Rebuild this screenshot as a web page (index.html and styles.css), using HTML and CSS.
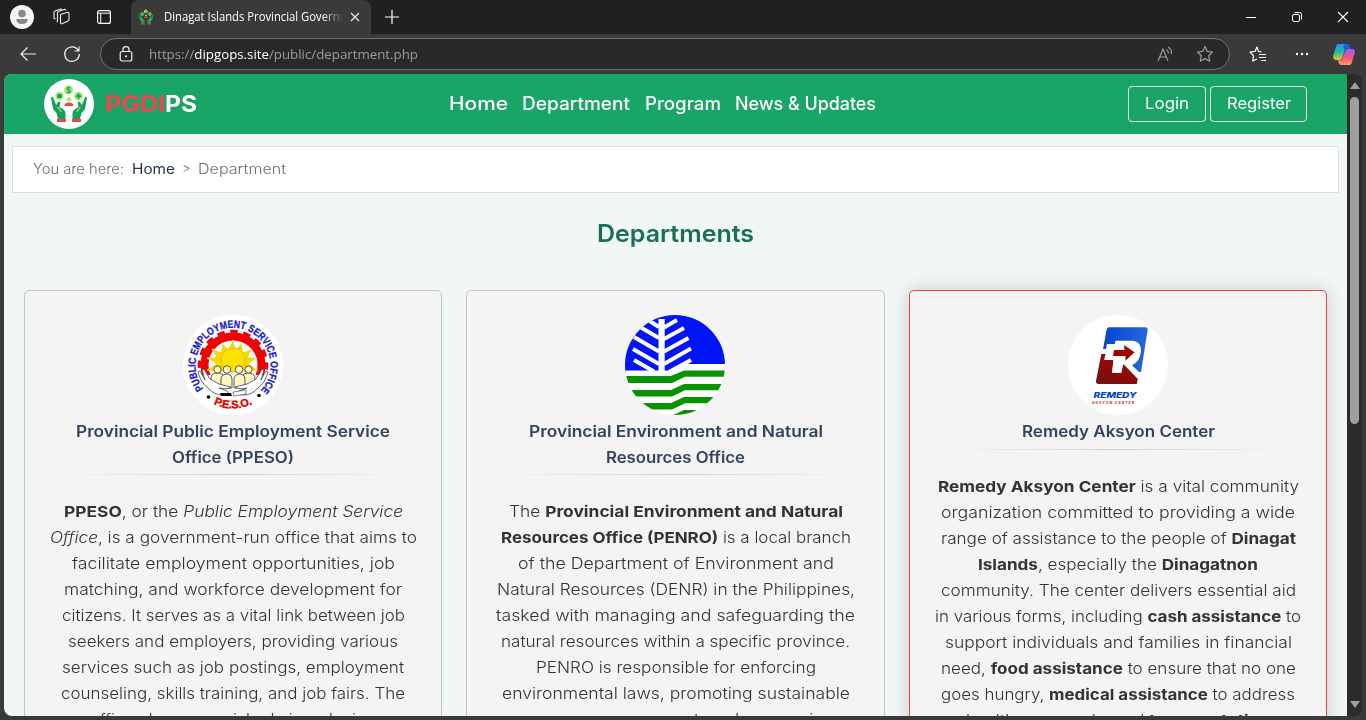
FILE: index.html
```html
<!DOCTYPE html>
<html lang="en">
<head>
<meta charset="utf-8">
<title>Dinagat Islands Provincial Government</title>
<link rel="stylesheet" href="styles.css">
</head>
<body>
<svg width="0" height="0" class="defs">
  <defs>
    <g id="hands">
      <path d="M7 18.500l1.800-.8 3.400 8.300 2-3q2-1.500 2 1l-.7 4 4 2.500q2 1.500 2 4V40h-7.500l-1.500-6-3.500-4z" fill="#13a357"/>
      <path d="M43 18.500l-1.800-.8-3.400 8.300-2-3q-2-1.500-2 1l.7 4-4 2.500q-2 1.500-2 4V40h7.500l1.500-6 3.500-4z" fill="#13a357"/>
      <path d="M13.500 28l4 5M36.500 28l-4 5" stroke="#a6ec6c" stroke-width="1.200"/>
      <path d="M13 40h9v3h-9zM28 40h9v3h-9zM20.500 27q0-3.500 4.500-3.500t4.500 3.500z" fill="#ee4549"/>
      <circle cx="15.500" cy="17" r="4.200" fill="#a6ec6c"/><circle cx="34.500" cy="17" r="4.200" fill="#a6ec6c"/>
      <circle cx="24.500" cy="11" r="4.500" fill="#a6ec6c"/><circle cx="25" cy="20.500" r="2.300" fill="#a6ec6c"/>
      <path d="M13.300 15h4.500v4h-4.500zM33.600 14.200h1.800v2h2v1.800h-2v2h-1.800v-2h-2v-1.800h2z" fill="#13a357"/>
      <text x="24.500" y="13.700" font-size="7.500" font-weight="700" text-anchor="middle" fill="#13a357">$</text>
    </g>
  </defs>
</svg>
<header class="titlebar">
  <svg class="avatar" viewBox="0 0 24 24"><circle cx="12" cy="12" r="12" fill="#f5f5f5"/><circle cx="12" cy="8.500" r="3.800" fill="#888"/><path d="M6.300 14h11.400q0 5-5.700 5t-5.700-5z" fill="#888"/></svg>
  <svg class="spaces" viewBox="0 0 18 18"><g fill="none" stroke="#eee" stroke-width="1.100" stroke-linejoin="round"><path d="M7.500 6.500l6.500-2q2-.5 2 1v6q0 1-1 1.500l-5.500 2.500q-2 .8-2-1z"/><path d="M5 12.500l-.5.200V5q0-1 1-1.400L11 1.500q1.500-.5 1.800 1M5 14q-1 0-.7-1.500"/><path d="M2.500 10.500q-1.500 1-1.500-.7V4.500q0-1 1-1.400L7 1.200q1.200-.4 1.700.5"/></g></svg>
  <svg class="panel" viewBox="0 0 14 14"><rect x=".6" y=".6" width="12.800" height="12.800" rx="2" fill="none" stroke="#fff" stroke-width="1.200"/><path d="M1 3.200h12M3.700 3v10" stroke="#fff"/></svg>
  <div class="tab">
    <svg class="favicon" viewBox="6 5 38 39"><use href="#hands"/></svg>
    <span class="tab-title"><span class="fit" data-w="186">Dinagat Islands Provincial Governm</span></span>
    <svg class="tab-x" viewBox="0 0 10 10"><path d="M1 1l8 8M9 1l-8 8" stroke="#eee" stroke-width="1.200"/></svg>
  </div>
  <svg class="plus" viewBox="0 0 14 14"><path d="M7 0v14M0 7h14" stroke="#fff" stroke-width="1.200"/></svg>
  <div class="win">
    <svg viewBox="0 0 12 12"><path d="M1 6.500h10" stroke="#fff"/></svg>
    <svg viewBox="0 0 12 12"><g fill="none" stroke="#fff"><rect x="1.500" y="3.500" width="7" height="7" rx="1.500"/><path d="M3.500 1.500h5q2 0 2 2v5"/></g></svg>
    <svg viewBox="0 0 12 12"><path d="M1 1l10 10M11 1L1 11" stroke="#fff" stroke-width="1.100"/></svg>
  </div>
</header>
<div class="toolbar">
  <svg class="back" viewBox="0 0 18 16"><path d="M17 8H2M8.500 1.500L2 8l6.500 6.500" fill="none" stroke="#eee" stroke-width="1.200"/></svg>
  <svg class="reload" viewBox="0 0 18 18"><path d="M15.600 6A7.300 7.300 0 1 0 16.300 9M16 1.500V6h-4.500" fill="none" stroke="#eee" stroke-width="1.200"/></svg>
  <div class="address">
    <svg class="lock" viewBox="0 0 14 16"><g fill="none" stroke="#eee" stroke-width="1.200"><rect x="1.200" y="5.500" width="11.600" height="9.500" rx="2"/><path d="M4 5.500V3.500a3 2.800 0 0 1 6 0v2"/></g><circle cx="7" cy="10.200" r="1" fill="#fff"/></svg>
    <span class="fit url" data-w="269">https://<b>dipgops.site</b>/public/department.php</span>
    <svg class="read" viewBox="0 0 16 16"><path d="M1 15L6 3l5 12M2.500 11h7M9.500 3.500q2 1.500 2 4M11 1q4 2.500 3.500 7" fill="none" stroke="#a0a0a0" stroke-width="1.100"/></svg>
    <svg class="star" viewBox="0 0 18 18"><path d="M9 1.500l2.300 4.900 5.200.7-3.800 3.700 1 5.400L9 13.600l-4.700 2.600 1-5.400L1.500 7.100l5.200-.7z" fill="none" stroke="#a0a0a0" stroke-width="1.200" stroke-linejoin="round"/></svg>
  </div>
  <svg class="favs" viewBox="0 0 18 18"><path d="M10 9.500h7M10 12.500h7M12 15.500h5M12.500 7l-3-.6L8 2 6 6.400l-5 .8 3.600 3.600-.9 5.200L8 14" fill="none" stroke="#fff" stroke-width="1.200" stroke-linejoin="round"/></svg>
  <svg class="dots" viewBox="0 0 14 4"><g fill="#fff"><circle cx="2" cy="2" r="1.200"/><circle cx="7" cy="2" r="1.200"/><circle cx="12" cy="2" r="1.200"/></g></svg>
  <svg class="copilot" viewBox="0 0 22 21">
    <defs><linearGradient id="ca" x2="0" y2="1"><stop stop-color="#159bf1"/><stop offset=".5" stop-color="#25b8a5"/><stop offset="1" stop-color="#e4cb20"/></linearGradient><linearGradient id="cb" x2="0" y2="1"><stop stop-color="#a35cf3"/><stop offset=".55" stop-color="#f05482"/><stop offset="1" stop-color="#ff9d4f"/></linearGradient></defs>
    <path d="M5 0h9q2 0 2.700 2.500L17.300 5H14q-2 0-2.500 1.800L9.500 13q-.8 3-3 3H3Q-.5 16 .4 11L3 2.500Q3.600 0 5 0z" fill="url(#ca)"/>
    <path d="M12 0h2q2 0 2.700 2.500L17.300 5H14q-1.500 0-2 1L10 3z" fill="#195ce0"/>
    <path d="M17 21H8q-2 0-2.700-3l-.6-2H7q2 0 2.500-2L12 7.500Q12.600 5 15 5h4q3.500 0 2.600 4.500L19 18q-.7 3-2 3z" fill="url(#cb)"/>
  </svg>
</div>
<div class="viewport">
  <div class="page">
    <nav class="navbar">
      <svg class="brand-logo" viewBox="0 0 50 50"><circle cx="25" cy="25" r="25" fill="#fff"/><use href="#hands"/></svg>
      <div class="brand"><span class="fit" data-w="60"><span class="red">PGDI</span></span><span class="fit" data-w="32">PS</span></div>
      <div class="links"><a class="fit" data-w="59">Home</a><a class="fit" data-w="108">Department</a><a class="fit" data-w="76">Program</a><a class="fit" data-w="141">News &amp; Updates</a></div>
      <div class="auth"><a class="btn login"><span class="fit" data-w="44">Login</span></a><a class="btn register"><span class="fit" data-w="64">Register</span></a></div>
    </nav>
    <div class="crumbs"><span class="fit here" data-w="91">You are here:</span><span class="fit home" data-w="43">Home</span><span class="sep">&gt;</span><span class="fit" data-w="88">Department</span></div>
    <h1><span class="fit" data-w="157">Departments</span></h1>
    <main class="cards">
      <article class="card">
        <svg class="seal" viewBox="0 0 100 100">
          <defs><path id="arcTop" d="M20.500 73.500A37.500 37.500 0 1 1 79.500 73.500"/><path id="arcBottom" d="M27 87A44 44 0 0 0 73 87"/></defs>
          <circle cx="50" cy="50" r="50" fill="#fff"/>
          <circle cx="50" cy="50" r="33.500" fill="none" stroke="#f00000" stroke-width="3.500" stroke-dasharray="7.500 5.650" stroke-dashoffset="3"/>
          <circle cx="50" cy="50" r="28.500" fill="none" stroke="#f00000" stroke-width="8"/>
          <path d="M14 60h72v9L68 85H32L14 69z" fill="#fff"/>
          <path d="M50 25l3 9 6-6 1 9 9-3-4 8 9 1-8 6 9 6-9 2H33l-9-2 9-6-9-6 9-1-4-8 9 3 1-9 6 6z" fill="#f2d900" stroke="#fff" stroke-width=".6"/>
          <circle cx="50" cy="45" r="12" fill="#ffe200" stroke="#d0a800" stroke-width=".6"/>
          <g fill="#fff6c4" stroke="#333" stroke-width=".8">
            <path d="M28 69V63q0-4 5-5h3q5 1 5 5v8zM59 71v-8q0-4 5-5h3q5 1 5 5v6z"/><circle cx="34.500" cy="54.500" r="3.600"/><circle cx="65.500" cy="54.500" r="3.600"/>
            <path d="M38 73v-9q0-4 5-5h2q4 1 4 5v9zM51 73v-9q0-4 5-5h2q4 1 4 5v9z"/><circle cx="44" cy="54.500" r="3.800"/><circle cx="56" cy="54.500" r="3.800"/>
          </g>
          <g fill="#fff" stroke="#444" stroke-width=".8"><path d="M15 57l2-1 5 9-3-10 2-1 6 10 9 5 12 3q-4 3-12 1l8 3q4 4-4 4-9 0-15-7-7-5-10-16zM85 57l-2-1-5 9 3-10-2-1-6 10-9 5-12 3q4 3 12 1l-8 3q-4 4 4 4 9 0 15-7 7-5 10-16z"/></g>
          <path d="M37 78h11l1 3H38z" fill="#000"/><path d="M50 77l13-2v4l-12 2z" fill="#fff" stroke="#333" stroke-width=".6"/>
          <text class="seal-text" fill="#1a22c4" stroke="#1a22c4" stroke-width=".3" font-size="10.500"><textPath href="#arcTop" textLength="170" lengthAdjust="spacingAndGlyphs">PUBLIC EMPLOYMENT SERVICE OFFICE</textPath></text>
          <text class="seal-text" fill="#e00000" stroke="#e00000" stroke-width=".4" font-size="11"><textPath href="#arcBottom" startOffset="50%" text-anchor="middle" textLength="40">P.E.S.O.</textPath></text>
          <circle cx="25.500" cy="82" r="1.800"/><circle cx="76" cy="80.500" r="1.800"/>
        </svg>
        <h2><span class="fit" data-w="314">Provincial Public Employment Service</span><br><span class="fit" data-w="122">Office (PPESO)</span></h2>
        <div class="rule"></div>
        <p><span class="fit" data-w="339"><b>PPESO</b>, or the <i>Public Employment Service</i></span><br>
        <span class="fit" data-w="367"><i>Office</i>, is a government-run office that aims to</span><br>
        <span class="fit" data-w="323">facilitate employment opportunities, job</span><br>
        <span class="fit" data-w="338">matching, and workforce development for</span><br>
        <span class="fit" data-w="343">citizens. It serves as a vital link between job</span><br>
        <span class="fit" data-w="330">seekers and employers, providing various</span><br>
        <span class="fit" data-w="342">services such as job postings, employment</span><br>
        <span class="fit" data-w="344">counseling, skills training, and job fairs. The</span><br>
        <span class="fit" data-w="286">office plays a crucial role in reducing</span></p>
      </article>
      <article class="card">
        <svg class="seal denr" viewBox="0 0 100 100">
          <clipPath id="disc"><circle cx="50" cy="50" r="50"/></clipPath>
          <g clip-path="url(#disc)"><path fill="#0014f5" d="M0 0h100v52H0z"/><path fill="#0014f5" d="M0 50h50v8H0z"/>
          <path d="M0 55.500h46L62 49h38v51H0z" fill="#fff"/>
          <path d="M36.600 4v54" stroke="#fff" stroke-width="6.200"/>
          <path d="M23 5l11 7M15 12l19 11M9 22l25 14.500M8 34l26 15M9 45l20 11.500M39 12.500L52 5M39 24l20-11M39 36.500L63.500 23M39 49l27-15.500M44 57l22-12" stroke="#fff" stroke-width="3.900"/>
          <path d="M0 61h46l13-5.500h41v6.200H60L47 68H0zM0 75h46l13-6h41v6.200H60l-13 6.300H0zM0 88h46l13-6h41v6.200H60l-13 6.300H0zM42 103l17-8h41v9z" fill="#0a9300"/></g>
        </svg>
        <h2><span class="fit" data-w="294">Provincial Environment and Natural</span><br><span class="fit" data-w="139">Resources Office</span></h2>
        <div class="rule"></div>
        <p><span class="fit" data-w="334">The <b>Provincial Environment and Natural</b></span><br>
        <span class="fit" data-w="350"><b>Resources Office (PENRO)</b> is a local branch</span><br>
        <span class="fit" data-w="316">of the Department of Environment and</span><br>
        <span class="fit" data-w="358">Natural Resources (DENR) in the Philippines,</span><br>
        <span class="fit" data-w="359">tasked with managing and safeguarding the</span><br>
        <span class="fit" data-w="349">natural resources within a specific province.</span><br>
        <span class="fit" data-w="280">PENRO is responsible for enforcing</span><br>
        <span class="fit" data-w="348">environmental laws, promoting sustainable</span><br>
        <span class="fit" data-w="316">resource management, and conserving</span></p>
      </article>
      <article class="card active">
        <svg class="seal" viewBox="0 0 100 100">
          <defs><linearGradient id="rb"><stop stop-color="#0045cf"/><stop offset="1" stop-color="#2867df"/></linearGradient><linearGradient id="rr" x1="1" x2="0" y2="1"><stop stop-color="#a50000"/><stop offset="1" stop-color="#741313"/></linearGradient></defs>
          <circle cx="50" cy="50" r="50" fill="#fff"/>
          <path d="M41 12.300h36q3 0 2.600 3L73 57h-8L50 40H34l4.500-25q.5-2.700 2.500-2.700z" fill="url(#rb)"/>
          <path d="M33.300 39h4l-1 6h9l-1 13h9l2-9 14.500 15-1 5H31q-3.500 0-3-3z" fill="url(#rr)"/>
          <path d="M47.500 25.700H65q8 1 8 10-1 11-9 14.500l8 7.800-2 3-15-12.500-2 9h-9l1.800-13.500h-9l1-5h-4.500l.8-5H38l.8-5h8z" fill="#fff"/>
          <path d="M46 35h10.500l-.5-5 10.500 7.300-9 8.500V41H45z" fill="#a40000"/>
          <text class="remedy" x="25.500" y="83" textLength="43" lengthAdjust="spacingAndGlyphs">REMEDY</text>
          <text class="aksyon" x="24" y="88.500" textLength="42">AKSYON CENTER</text>
        </svg>
        <h2><span class="fit" data-w="193">Remedy Aksyon Center</span></h2>
        <div class="rule"></div>
        <p><span class="fit" data-w="361"><b>Remedy Aksyon Center</b> is a vital community</span><br>
        <span class="fit" data-w="354">organization committed to providing a wide</span><br>
        <span class="fit" data-w="355">range of assistance to the people of <b>Dinagat</b></span><br>
        <span class="fit" data-w="280"><b>Islands</b>, especially the <b>Dinagatnon</b></span><br>
        <span class="fit" data-w="355">community. The center delivers essential aid</span><br>
        <span class="fit" data-w="366">in various forms, including <b>cash assistance</b> to</span><br>
        <span class="fit" data-w="347">support individuals and families in financial</span><br>
        <span class="fit" data-w="355">need, <b>food assistance</b> to ensure that no one</span><br>
        <span class="fit" data-w="354">goes hungry, <b>medical assistance</b> to address</span><br>
        <span class="fit" data-w="304">healthcare needs, and <b>transportation</b></span></p>
      </article>
    </main>
  </div>
  <div class="scrollbar"><i class="up"></i><i class="thumb"></i><i class="down"></i></div>
</div>
<script src="fit.js"></script>
</body>
</html>
```

FILE: styles.css
```css
* { box-sizing: border-box; }
body { margin: 0; width: 1366px; height: 720px; overflow: hidden; background: #3b3a3a; font-family: Inter, "Liberation Sans", sans-serif; }
svg { display: block; flex: none; }
.defs { position: absolute; }
.fit { display: inline-block; white-space: nowrap; transform-origin: 0 50%; }

.titlebar { display: flex; align-items: center; height: 34px; padding-left: 10px; background: #202020; font-family: "Open Sans", sans-serif; }
.avatar { width: 24px; height: 24px; }
.spaces { width: 18px; height: 18px; margin-left: 19px; }
.panel { width: 14px; height: 14px; margin-left: 26px; }
.tab { display: flex; align-items: center; width: 240px; height: 34px; margin-left: 20px; padding-left: 7px; background: #3b3a3a; border-radius: 8px 8px 0 0; }
.favicon { width: 16px; height: 16px; }
.tab-title { width: 180px; margin-left: 10px; padding-bottom: 1px; overflow: hidden; color: #fff; font-size: 12px; -webkit-mask-image: linear-gradient(90deg, #000 158px, transparent 180px); mask-image: linear-gradient(90deg, #000 158px, transparent 180px); }
.tab-x { width: 10px; height: 10px; margin-left: 6px; }
.plus { width: 14px; height: 14px; margin-left: 14px; }
.win { display: flex; gap: 34px; margin-left: auto; padding-right: 17px; }
.win svg { width: 12px; height: 12px; }

.toolbar { display: flex; align-items: center; height: 40px; padding-left: 19px; background: #3b3a3a; }
.back { width: 18px; height: 16px; }
.reload { width: 18px; height: 18px; margin-left: 26px; }
.address { display: flex; align-items: center; width: 1130px; height: 32px; margin-left: 19px; padding-left: 18px; border: 1px solid #717171; border-radius: 16px; background: #292929; }
.lock { width: 14px; height: 16px; margin-right: 16px; }
.url { color: #9c9c9c; font: 13.5px "Open Sans", sans-serif; padding-bottom: 1px; }
.url b { color: #fff; font-weight: 400; }
.read { width: 16px; height: 16px; margin-left: auto; }
.star { width: 18px; height: 18px; margin: 0 15px 0 23px; }
.favs { width: 18px; height: 18px; margin-left: 19px; }
.dots { width: 14px; height: 4px; margin-left: 28px; }
.copilot { width: 22px; height: 21px; margin-left: 24px; }

.viewport { display: flex; width: 1358px; height: 642px; margin-left: 4px; border-radius: 8px; overflow: hidden; background: #2b2b2b; }
.page { width: 1343px; overflow: hidden; background: #f1f7f7; }
.navbar { display: flex; align-items: center; height: 60px; padding: 0 40px; background: #18a566; color: #fff; }
.brand-logo { width: 50px; height: 50px; }
.brand { width: 343px; padding-left: 11px; font-size: 23px; font-weight: 700; }
.red { color: #ef4550; }
.links { display: flex; gap: 14.3px; padding: 0 0 1px 12px; font-size: 18px; font-weight: 500; }
.auth { display: flex; gap: 4px; margin-left: auto; }
.btn { display: flex; align-items: center; justify-content: center; height: 36px; border: 1px solid #e4ece9; border-radius: 4px; font-size: 16px; padding-bottom: 2px; }
.login { width: 78px; }
.register { width: 97px; }
.crumbs { display: flex; align-items: center; height: 47px; margin: 12px 8px 0; padding: 0 0 3px 20px; background: #fff; border: 1px solid #dcdfe5; color: #6a6f76; font-size: 14px; font-weight: 300; }
.here { margin-right: 8px; }
.home { color: #28334d; font-weight: 400; }
.sep { width: 9px; margin: 0 7px 0 7px; font-size: 13px; }
h1 { margin: 26px 0 0; text-align: center; color: #19704f; font-size: 24px; line-height: 30px; font-weight: 600; height: 71px; }
.cards { display: grid; grid-template-columns: 418px 419px 418px; gap: 24px; padding: 0 20px; }
.card { height: 520px; padding: 24px 0 0; border: 1px solid #bfc5cf; border-radius: 5px; background: #f4f4f4; text-align: center; }
.active { border-color: #f0424c; box-shadow: 0 0 18px rgba(0, 0, 0, .18); }
.seal { width: 100px; height: 100px; margin: 0 auto 4px; }
.denr { margin-left: 158px; }
.card h2 { margin: 0; color: #34435f; font-size: 15.5px; line-height: 25.6px; font-weight: 600; }
.rule { width: 350px; height: 1px; margin: 4px auto 24px; background: linear-gradient(90deg, transparent, #d2d2d2, transparent); }
.card p { margin: 0; color: #333; font-size: 15.2px; line-height: 26px; font-weight: 300; }
.card p b { font-weight: 700; }
.seal-text { font-family: "Liberation Sans", sans-serif; font-weight: 700; }
.remedy { font: italic 800 8px Inter, sans-serif; fill: #0046c8; }
.aksyon { font: 700 3.6px Inter, sans-serif; fill: #c03030; }

.scrollbar { display: flex; flex-direction: column; align-items: center; width: 15px; background: #2b2b2b; }
.up { margin-top: 8px; border: 5px solid transparent; border-top: 0; border-bottom: 7px solid #9f9f9f; }
.thumb { width: 9px; height: 327px; margin-top: 8px; border-radius: 5px; background: #9f9f9f; }
.down { margin: auto 0 8px; border: 5px solid transparent; border-bottom: 0; border-top: 7px solid #9f9f9f; }
```

FILE: fit.js
```js
// Stretch each label horizontally to its set width, keeping the flow in step.
document.querySelectorAll('.fit').forEach(function (el) {
  var target = parseFloat(el.dataset.w);
  var natural = el.getBoundingClientRect().width;
  var margin = parseFloat(getComputedStyle(el).marginRight) || 0;
  el.style.transform = 'scaleX(' + target / natural + ')';
  el.style.marginRight = margin + target - natural + 'px';
});
```
